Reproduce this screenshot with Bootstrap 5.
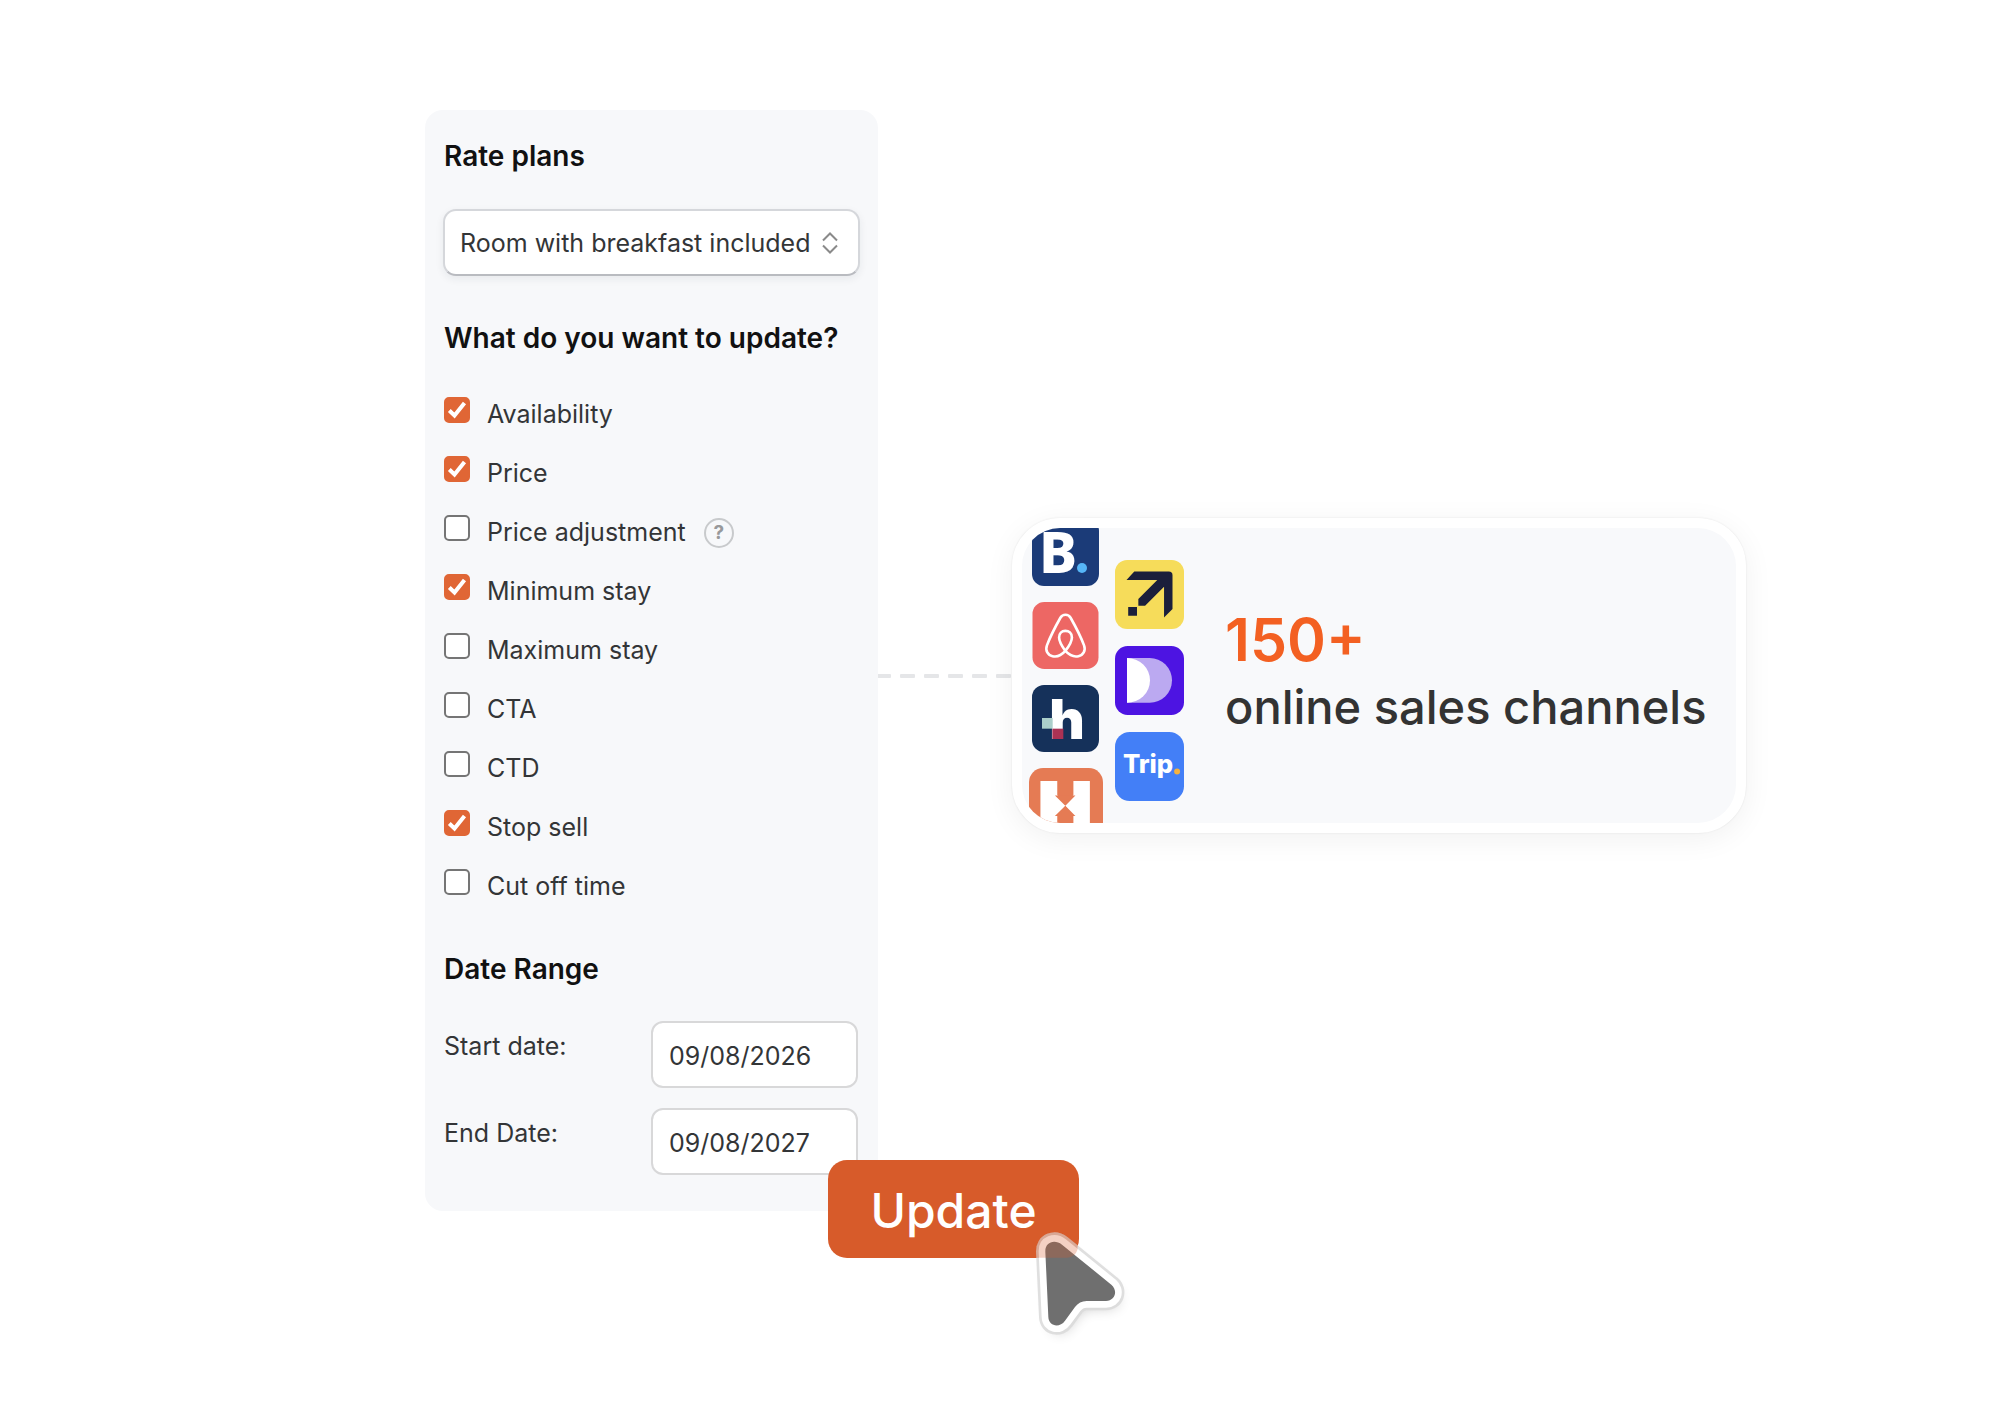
<!DOCTYPE html>
<html lang="en">
<head>
<meta charset="utf-8">
<meta name="viewport" content="width=device-width, initial-scale=1">
<title>Bulk update</title>
<link href="https://cdn.jsdelivr.net/npm/bootstrap@5.3.0/dist/css/bootstrap.min.css" rel="stylesheet">
<style>
body{font-family:Inter,"Liberation Sans",sans-serif;color:#333537;background:#fff}
.stage{padding:110px 0 190px 170px}
.panel{width:453px;background:#f7f8fa;border-radius:18px;padding:29px 18px 36px;font-size:25px}
.panel h2{font-size:28px;line-height:34px;font-weight:600;color:#111;margin:0;padding-left:1px}
.panel .plan{height:67px;margin:36px 0 45px;padding:2px 40px 0 15px;font-size:25px;color:#333537;border:2px solid #d5d7db;border-bottom-color:#b9bbc0;border-radius:13px;box-shadow:0 3px 8px rgba(30,40,60,.07);
background:#fff url("data:image/svg+xml,%3Csvg xmlns='http://www.w3.org/2000/svg' width='16' height='22' fill='none' stroke='%238a8a8a' stroke-width='2'%3E%3Cpath d='M1 8.500 8 1.500l7 7M1 13.500l7 7 7-7'/%3E%3C/svg%3E") no-repeat right 20px center/16px 22px}
.opts{margin:29px 0 37px;padding-left:1px}
.opt{height:59px;line-height:60px;gap:17px}
.opt .form-check-input{width:26px;height:26px;margin:13px 0 0;border:2px solid #757575;border-radius:5px;flex:none}
.opt .form-check-input:checked{background-color:#e06635;border-color:#e06635;background-size:22px;background-image:url("data:image/svg+xml,%3Csvg xmlns='http://www.w3.org/2000/svg' viewBox='0 0 22 22'%3E%3Cpath d='M3.300 11.500 8.500 16.500 18.500 4' fill='none' stroke='%23fff' stroke-width='4'/%3E%3C/svg%3E")}
.help{width:30px;height:30px;margin:16px 0 0 1px;border:2px solid #c8cacc;border-radius:50%;background:none;color:#98999b;font-size:19px;line-height:26px;font-weight:700}
.dates{margin-top:35px;gap:20px;padding:0 2px 0 1px}
.dates label{line-height:50px}
.dates .form-control{width:207px;height:67px;padding:2px 16px 0;font-size:25px;color:#333537;border:2px solid #d8d8d9;border-radius:12px}
.go{right:-201px;bottom:-47px;width:251px;height:98px;border:0;border-radius:19px;background:#d75b2a;color:#fff;font-size:48px;font-weight:500;padding:4px 0 0;line-height:80px}
.go:hover{background:#c95122;color:#fff}
.pointer{right:-264px;bottom:-150px;width:120px;height:138px}
.link-line{width:136px;height:4px;margin:30px 0 0 -2px}
.channels{width:734px;height:315px;margin-top:30px;border:10px solid #fff;border-radius:48px;box-shadow:0 0 2px rgba(0,0,0,.1),0 6px 30px rgba(0,0,0,.06);background:#fff}
.inside{height:295px;background:#f8f9fb;border-radius:38px;gap:11px;padding-left:6px}
.col-a{width:75px;gap:16px;margin-top:-9px}
.col-b{width:70px;gap:17px;margin-top:32px}
.logo{width:67px;height:67px;flex:none}
.logo-b{width:69px;height:69px}
.logo-l{width:74px;height:74px}
.claim{margin-left:30px;padding-bottom:8px;font-size:47px;line-height:64px;font-weight:500;color:#333}
.claim strong{font-size:59px;line-height:70px;font-weight:600;color:#f36022}
</style>
</head>
<body>
<main class="stage d-flex justify-content-center align-items-center">
  <form class="panel position-relative flex-shrink-0">
    <h2><label for="plan">Rate plans</label></h2>
    <select id="plan" class="form-select plan"><option>Room with breakfast included</option></select>
    <h2>What do you want to update?</h2>
    <div class="opts">
      <div class="opt d-flex"><input class="form-check-input" type="checkbox" id="o1" checked><label for="o1">Availability</label></div>
      <div class="opt d-flex"><input class="form-check-input" type="checkbox" id="o2" checked><label for="o2">Price</label></div>
      <div class="opt d-flex"><input class="form-check-input" type="checkbox" id="o3"><label for="o3">Price adjustment</label><button type="button" class="help p-0" aria-label="Help">?</button></div>
      <div class="opt d-flex"><input class="form-check-input" type="checkbox" id="o4" checked><label for="o4">Minimum stay</label></div>
      <div class="opt d-flex"><input class="form-check-input" type="checkbox" id="o5"><label for="o5">Maximum stay</label></div>
      <div class="opt d-flex"><input class="form-check-input" type="checkbox" id="o6"><label for="o6">CTA</label></div>
      <div class="opt d-flex"><input class="form-check-input" type="checkbox" id="o7"><label for="o7">CTD</label></div>
      <div class="opt d-flex"><input class="form-check-input" type="checkbox" id="o8" checked><label for="o8">Stop sell</label></div>
      <div class="opt d-flex"><input class="form-check-input" type="checkbox" id="o9"><label for="o9">Cut off time</label></div>
    </div>
    <h2>Date Range</h2>
    <div class="dates d-flex flex-column">
      <div class="d-flex justify-content-between"><label for="from">Start date:</label><input class="form-control" id="from" type="text" value="09/08/2026"></div>
      <div class="d-flex justify-content-between"><label for="to">End Date:</label><input class="form-control" id="to" type="text" value="09/08/2027"></div>
    </div>
    <button type="button" class="btn go position-absolute">Update</button>
    <svg class="pointer position-absolute" viewBox="640 280 360 414" aria-hidden="true">
      <defs><filter id="soft" x="-30%" y="-30%" width="160%" height="160%"><feGaussianBlur stdDeviation="20"/></filter></defs>
      <path d="M710 366C709 338 737 327 760 345L908 465C929 483 919 514 892 514H834C819 514 808 520 799 532L769 573C752 597 720 589 719 562Z" fill="#000" opacity=".22" filter="url(#soft)" transform="translate(10 20)"/>
      <g stroke-linejoin="round">
        <path d="M710 366C709 338 737 327 760 345L908 465C929 483 919 514 892 514H834C819 514 808 520 799 532L769 573C752 597 720 589 719 562Z" fill="none" stroke="#d9d9d9" stroke-opacity=".85" stroke-width="56"/>
        <path d="M710 366C709 338 737 327 760 345L908 465C929 483 919 514 892 514H834C819 514 808 520 799 532L769 573C752 597 720 589 719 562Z" fill="#6f6f6f" stroke="#fff" stroke-width="40"/>
        <path d="M710 366C709 338 737 327 760 345L908 465C929 483 919 514 892 514H834C819 514 808 520 799 532L769 573C752 597 720 589 719 562Z" fill="#6f6f6f"/>
        <path d="M682 384V366C680 316 736 289 778 322L807 347V359Q799 384 776 384Z" fill="#d75b2a" opacity=".28"/>
      </g>
    </svg>
  </form>
  <svg class="link-line flex-shrink-0" viewBox="0 0 136 4" aria-hidden="true"><g fill="#e5e6e8"><rect width="15" height="4" rx="1"/><rect x="24" width="15" height="4" rx="1"/><rect x="48" width="15" height="4" rx="1"/><rect x="72" width="15" height="4" rx="1"/><rect x="96" width="15" height="4" rx="1"/><rect x="120" width="15" height="4" rx="1"/></g></svg>
  <section class="channels flex-shrink-0">
    <div class="inside d-flex align-items-start overflow-hidden">
      <div class="col-a d-flex flex-column align-items-center flex-shrink-0">
        <svg class="logo" viewBox="0 0 67 67"><rect width="67" height="67" rx="12" fill="#1b3b78"/><text x="7" y="54" font-family="Noto Sans" font-weight="800" font-size="57" fill="#fff">B</text><circle cx="50" cy="49" r="5" fill="#56b6f7"/></svg>
        <svg class="logo" viewBox="96 309 201 204"><rect x="96" y="309" width="201" height="204" rx="36" fill="#ed6764"/><path d="M196 458C186 444 177 430 177 417C177 404 185 397 196 397S216 404 216 417C216 430 207 444 196 458C181 475 165 476 157 474C143 471 134 457 140 441C148 420 168 380 181 357C188 345 205 345 212 357C225 380 245 420 253 441C259 457 250 471 236 474C228 476 212 475 196 458Z" fill="none" stroke="#fff" stroke-width="8"/></svg>
        <svg class="logo" viewBox="96 51 201 201"><rect x="96" y="51" width="201" height="201" rx="36" fill="#15315a"/><text x="148" y="213" font-family="Inter" font-weight="900" font-size="164" fill="#fff">h</text><rect x="126" y="150" width="32" height="32" fill="#abcfca"/><rect x="157" y="182" width="33" height="31" fill="#ab3254"/></svg>
        <svg class="logo logo-l" viewBox="86 294 220 220"><rect x="86" y="294" width="220" height="220" rx="42" fill="#e57b54"/><path d="M120 333H170V374L194 405 218 374V333H267V480H218V437L194 407 170 437V480H120Z" fill="#fff"/><path d="M163 376H224L194 406ZM163 437H224L194 406Z" fill="#e57b54"/></svg>
      </div>
      <div class="col-b d-flex flex-column align-items-center flex-shrink-0">
        <svg class="logo logo-b" viewBox="345 183 204 204"><rect x="345" y="183" width="204" height="204" rx="36" fill="#f6dc5a"/><path d="M379 242 402 217H504Q515 217 515 228V328L490 353V262L434 318H414V298L470 242ZM384 322h26v26h-26z" fill="#1b1f3b"/></svg>
        <svg class="logo logo-b" viewBox="0 0 207 207"><rect width="207" height="207" rx="38" fill="#4d14e2"/><path d="M36 36H104A67 67 0 0 1 104 170H36Z" fill="#bba9f1"/><path d="M36 36A69 67 0 0 1 36 170Z" fill="#fff"/></svg>
        <svg class="logo logo-b" viewBox="0 0 70 70"><rect width="70" height="70" rx="15" fill="#437ff7"/><text x="8" y="42" font-family="Inter" font-weight="800" font-size="26" fill="#fff">Trip</text><circle cx="63" cy="40" r="3" fill="#f5b13d"/></svg>
      </div>
      <div class="claim align-self-center text-nowrap"><strong class="d-block">150+</strong>online sales channels</div>
    </div>
  </section>
</main>
<script src="https://cdn.jsdelivr.net/npm/bootstrap@5.3.0/dist/js/bootstrap.bundle.min.js"></script>
</body>
</html>
